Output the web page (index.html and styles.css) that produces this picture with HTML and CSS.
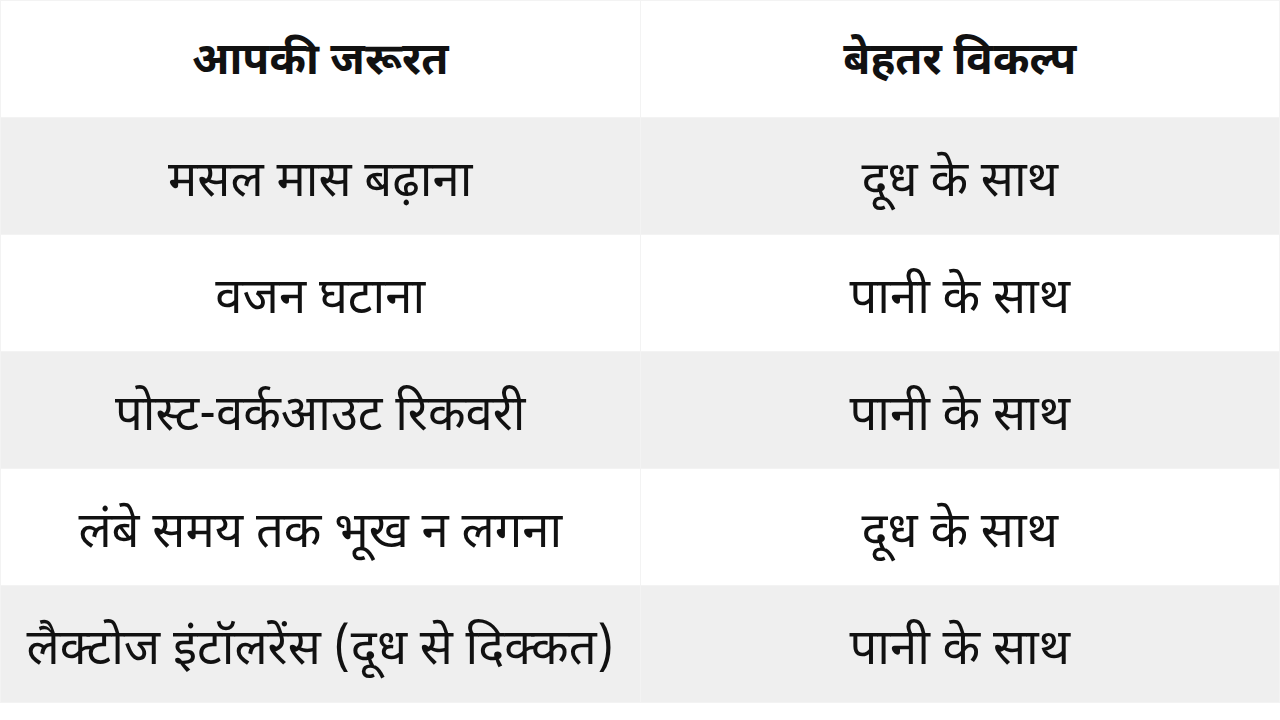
FILE: index.html
```html
<!DOCTYPE html>
<html lang="hi">
<head>
<meta charset="utf-8">
<link rel="stylesheet" href="styles.css">
</head>
<body>
<table class="cmp">
  <thead>
    <tr><th>आपकी जरूरत</th><th>बेहतर विकल्प</th></tr>
  </thead>
  <tbody>
    <tr><td>मसल मास बढ़ाना</td><td>दूध के साथ</td></tr>
    <tr><td>वजन घटाना</td><td>पानी के साथ</td></tr>
    <tr><td>पोस्ट-वर्कआउट रिकवरी</td><td>पानी के साथ</td></tr>
    <tr><td>लंबे समय तक भूख न लगना</td><td>दूध के साथ</td></tr>
    <tr><td>लैक्टोज इंटॉलरेंस (दूध से दिक्कत)</td><td>पानी के साथ</td></tr>
  </tbody>
</table>
</body>
</html>
```
FILE: styles.css
```css
html, body {
  margin: 0;
  padding: 0;
  background: #ffffff;
}
body {
  font-family: "Noto Sans Devanagari", "Noto Sans", "Lohit Devanagari", sans-serif;
  color: #111111;
}
.cmp {
  width: 1280px;
  border-collapse: collapse;
  table-layout: fixed;
}
.cmp th, .cmp td {
  box-sizing: border-box;
  height: 117px;
  padding: 0;
  text-align: center;
  vertical-align: middle;
  border: 1px solid #f3f3f3;
}
.cmp th {
  padding-top: 8px;
  font-size: 44px;
  font-weight: 700;
}
.cmp td {
  padding-top: 16px;
  font-size: 49px;
  font-weight: 400;
}
.cmp tbody tr:nth-child(odd) {
  background: #efefef;
}
```
